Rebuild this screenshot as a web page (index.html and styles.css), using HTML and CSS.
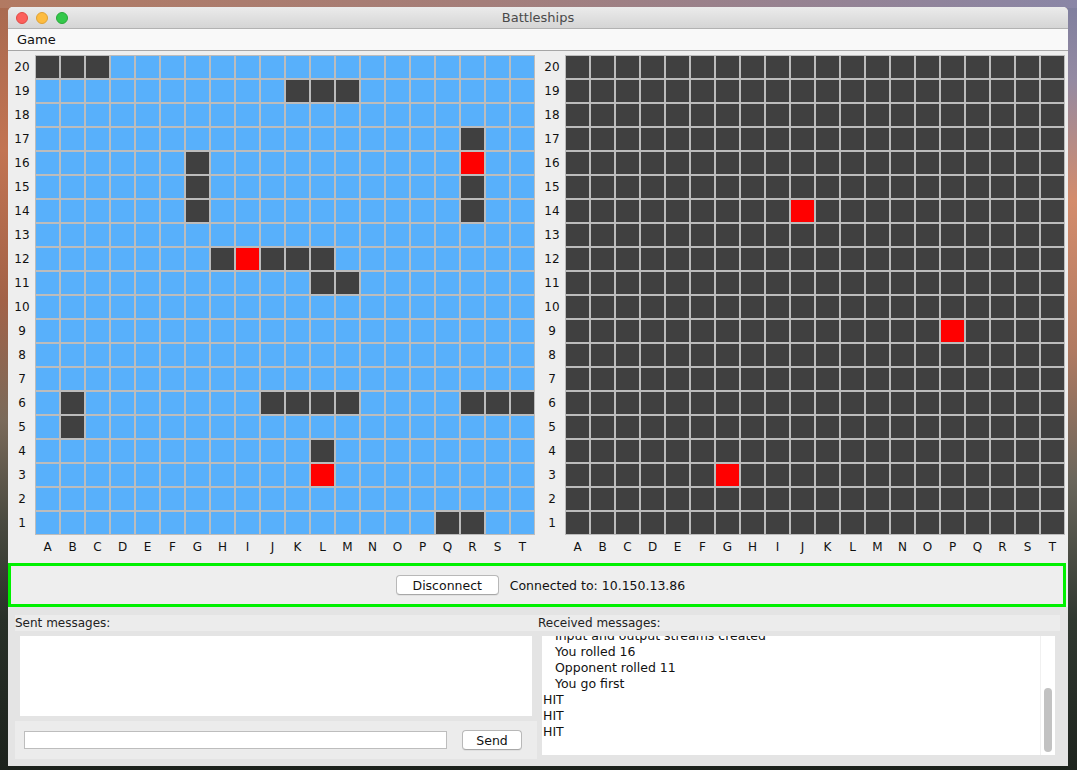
FILE: index.html
```html
<!DOCTYPE html>
<html>
<head>
<meta charset="utf-8">
<title>Battleships</title>
<link rel="stylesheet" href="styles.css">
</head>
<body>
<div class="window">
  <div class="titlebar">
    <div class="lights"><span class="light red"></span><span class="light yellow"></span><span class="light green"></span></div>
    <div class="title">Battleships</div>
    <div></div>
  </div>
  <div class="menubar"><span class="menu">Game</span></div>
  <div class="content">
    <div class="boards">
      <div class="board">
        <div class="rowlabels"><span>20</span><span>19</span><span>18</span><span>17</span><span>16</span><span>15</span><span>14</span><span>13</span><span>12</span><span>11</span><span>10</span><span>9</span><span>8</span><span>7</span><span>6</span><span>5</span><span>4</span><span>3</span><span>2</span><span>1</span></div>
        <div class="grid own">
<i class=s></i><i class=s></i><i class=s></i><i></i><i></i> <i></i><i></i><i></i><i></i><i></i> <i></i><i></i><i></i><i></i><i></i> <i></i><i></i><i></i><i></i><i></i>
<i></i><i></i><i></i><i></i><i></i> <i></i><i></i><i></i><i></i><i></i> <i class=s></i><i class=s></i><i class=s></i><i></i><i></i> <i></i><i></i><i></i><i></i><i></i>
<i></i><i></i><i></i><i></i><i></i> <i></i><i></i><i></i><i></i><i></i> <i></i><i></i><i></i><i></i><i></i> <i></i><i></i><i></i><i></i><i></i>
<i></i><i></i><i></i><i></i><i></i> <i></i><i></i><i></i><i></i><i></i> <i></i><i></i><i></i><i></i><i></i> <i></i><i></i><i class=s></i><i></i><i></i>
<i></i><i></i><i></i><i></i><i></i> <i></i><i class=s></i><i></i><i></i><i></i> <i></i><i></i><i></i><i></i><i></i> <i></i><i></i><i class=h></i><i></i><i></i>
<i></i><i></i><i></i><i></i><i></i> <i></i><i class=s></i><i></i><i></i><i></i> <i></i><i></i><i></i><i></i><i></i> <i></i><i></i><i class=s></i><i></i><i></i>
<i></i><i></i><i></i><i></i><i></i> <i></i><i class=s></i><i></i><i></i><i></i> <i></i><i></i><i></i><i></i><i></i> <i></i><i></i><i class=s></i><i></i><i></i>
<i></i><i></i><i></i><i></i><i></i> <i></i><i></i><i></i><i></i><i></i> <i></i><i></i><i></i><i></i><i></i> <i></i><i></i><i></i><i></i><i></i>
<i></i><i></i><i></i><i></i><i></i> <i></i><i></i><i class=s></i><i class=h></i><i class=s></i> <i class=s></i><i class=s></i><i></i><i></i><i></i> <i></i><i></i><i></i><i></i><i></i>
<i></i><i></i><i></i><i></i><i></i> <i></i><i></i><i></i><i></i><i></i> <i></i><i class=s></i><i class=s></i><i></i><i></i> <i></i><i></i><i></i><i></i><i></i>
<i></i><i></i><i></i><i></i><i></i> <i></i><i></i><i></i><i></i><i></i> <i></i><i></i><i></i><i></i><i></i> <i></i><i></i><i></i><i></i><i></i>
<i></i><i></i><i></i><i></i><i></i> <i></i><i></i><i></i><i></i><i></i> <i></i><i></i><i></i><i></i><i></i> <i></i><i></i><i></i><i></i><i></i>
<i></i><i></i><i></i><i></i><i></i> <i></i><i></i><i></i><i></i><i></i> <i></i><i></i><i></i><i></i><i></i> <i></i><i></i><i></i><i></i><i></i>
<i></i><i></i><i></i><i></i><i></i> <i></i><i></i><i></i><i></i><i></i> <i></i><i></i><i></i><i></i><i></i> <i></i><i></i><i></i><i></i><i></i>
<i></i><i class=s></i><i></i><i></i><i></i> <i></i><i></i><i></i><i></i><i class=s></i> <i class=s></i><i class=s></i><i class=s></i><i></i><i></i> <i></i><i></i><i class=s></i><i class=s></i><i class=s></i>
<i></i><i class=s></i><i></i><i></i><i></i> <i></i><i></i><i></i><i></i><i></i> <i></i><i></i><i></i><i></i><i></i> <i></i><i></i><i></i><i></i><i></i>
<i></i><i></i><i></i><i></i><i></i> <i></i><i></i><i></i><i></i><i></i> <i></i><i class=s></i><i></i><i></i><i></i> <i></i><i></i><i></i><i></i><i></i>
<i></i><i></i><i></i><i></i><i></i> <i></i><i></i><i></i><i></i><i></i> <i></i><i class=h></i><i></i><i></i><i></i> <i></i><i></i><i></i><i></i><i></i>
<i></i><i></i><i></i><i></i><i></i> <i></i><i></i><i></i><i></i><i></i> <i></i><i></i><i></i><i></i><i></i> <i></i><i></i><i></i><i></i><i></i>
<i></i><i></i><i></i><i></i><i></i> <i></i><i></i><i></i><i></i><i></i> <i></i><i></i><i></i><i></i><i></i> <i></i><i class=s></i><i class=s></i><i></i><i></i>
        </div>
        <div class="collabels"><span>A</span><span>B</span><span>C</span><span>D</span><span>E</span><span>F</span><span>G</span><span>H</span><span>I</span><span>J</span><span>K</span><span>L</span><span>M</span><span>N</span><span>O</span><span>P</span><span>Q</span><span>R</span><span>S</span><span>T</span></div>
      </div>
      <div class="board">
        <div class="rowlabels"><span>20</span><span>19</span><span>18</span><span>17</span><span>16</span><span>15</span><span>14</span><span>13</span><span>12</span><span>11</span><span>10</span><span>9</span><span>8</span><span>7</span><span>6</span><span>5</span><span>4</span><span>3</span><span>2</span><span>1</span></div>
        <div class="grid enemy">
<i></i><i></i><i></i><i></i><i></i> <i></i><i></i><i></i><i></i><i></i> <i></i><i></i><i></i><i></i><i></i> <i></i><i></i><i></i><i></i><i></i>
<i></i><i></i><i></i><i></i><i></i> <i></i><i></i><i></i><i></i><i></i> <i></i><i></i><i></i><i></i><i></i> <i></i><i></i><i></i><i></i><i></i>
<i></i><i></i><i></i><i></i><i></i> <i></i><i></i><i></i><i></i><i></i> <i></i><i></i><i></i><i></i><i></i> <i></i><i></i><i></i><i></i><i></i>
<i></i><i></i><i></i><i></i><i></i> <i></i><i></i><i></i><i></i><i></i> <i></i><i></i><i></i><i></i><i></i> <i></i><i></i><i></i><i></i><i></i>
<i></i><i></i><i></i><i></i><i></i> <i></i><i></i><i></i><i></i><i></i> <i></i><i></i><i></i><i></i><i></i> <i></i><i></i><i></i><i></i><i></i>
<i></i><i></i><i></i><i></i><i></i> <i></i><i></i><i></i><i></i><i></i> <i></i><i></i><i></i><i></i><i></i> <i></i><i></i><i></i><i></i><i></i>
<i></i><i></i><i></i><i></i><i></i> <i></i><i></i><i></i><i></i><i class=h></i> <i></i><i></i><i></i><i></i><i></i> <i></i><i></i><i></i><i></i><i></i>
<i></i><i></i><i></i><i></i><i></i> <i></i><i></i><i></i><i></i><i></i> <i></i><i></i><i></i><i></i><i></i> <i></i><i></i><i></i><i></i><i></i>
<i></i><i></i><i></i><i></i><i></i> <i></i><i></i><i></i><i></i><i></i> <i></i><i></i><i></i><i></i><i></i> <i></i><i></i><i></i><i></i><i></i>
<i></i><i></i><i></i><i></i><i></i> <i></i><i></i><i></i><i></i><i></i> <i></i><i></i><i></i><i></i><i></i> <i></i><i></i><i></i><i></i><i></i>
<i></i><i></i><i></i><i></i><i></i> <i></i><i></i><i></i><i></i><i></i> <i></i><i></i><i></i><i></i><i></i> <i></i><i></i><i></i><i></i><i></i>
<i></i><i></i><i></i><i></i><i></i> <i></i><i></i><i></i><i></i><i></i> <i></i><i></i><i></i><i></i><i></i> <i class=h></i><i></i><i></i><i></i><i></i>
<i></i><i></i><i></i><i></i><i></i> <i></i><i></i><i></i><i></i><i></i> <i></i><i></i><i></i><i></i><i></i> <i></i><i></i><i></i><i></i><i></i>
<i></i><i></i><i></i><i></i><i></i> <i></i><i></i><i></i><i></i><i></i> <i></i><i></i><i></i><i></i><i></i> <i></i><i></i><i></i><i></i><i></i>
<i></i><i></i><i></i><i></i><i></i> <i></i><i></i><i></i><i></i><i></i> <i></i><i></i><i></i><i></i><i></i> <i></i><i></i><i></i><i></i><i></i>
<i></i><i></i><i></i><i></i><i></i> <i></i><i></i><i></i><i></i><i></i> <i></i><i></i><i></i><i></i><i></i> <i></i><i></i><i></i><i></i><i></i>
<i></i><i></i><i></i><i></i><i></i> <i></i><i></i><i></i><i></i><i></i> <i></i><i></i><i></i><i></i><i></i> <i></i><i></i><i></i><i></i><i></i>
<i></i><i></i><i></i><i></i><i></i> <i></i><i class=h></i><i></i><i></i><i></i> <i></i><i></i><i></i><i></i><i></i> <i></i><i></i><i></i><i></i><i></i>
<i></i><i></i><i></i><i></i><i></i> <i></i><i></i><i></i><i></i><i></i> <i></i><i></i><i></i><i></i><i></i> <i></i><i></i><i></i><i></i><i></i>
<i></i><i></i><i></i><i></i><i></i> <i></i><i></i><i></i><i></i><i></i> <i></i><i></i><i></i><i></i><i></i> <i></i><i></i><i></i><i></i><i></i>
        </div>
        <div class="collabels"><span>A</span><span>B</span><span>C</span><span>D</span><span>E</span><span>F</span><span>G</span><span>H</span><span>I</span><span>J</span><span>K</span><span>L</span><span>M</span><span>N</span><span>O</span><span>P</span><span>Q</span><span>R</span><span>S</span><span>T</span></div>
      </div>
    </div>
    <div class="status">
      <button class="btn disconnect">Disconnect</button>
      <span class="conn">Connected to: 10.150.13.86</span>
    </div>
    <div class="chat">
      <div class="sent">
        <div class="header">Sent messages:</div>
        <div class="sentbox"></div>
        <div class="inputrow">
          <input class="msginput" type="text">
          <button class="btn send">Send</button>
        </div>
      </div>
      <div class="received">
        <div class="header recv-h">Received messages:</div>
        <div class="recvbox">
          <div class="recvtext">
            <div class="scrolled">
              <div class="line ind">Input and output streams created</div>
              <div class="line ind">You rolled 16</div>
              <div class="line ind">Opponent rolled 11</div>
              <div class="line ind">You go first</div>
              <div class="line">HIT</div>
              <div class="line">HIT</div>
              <div class="line">HIT</div>
            </div>
          </div>
          <div class="scrollbar"><div class="thumb"></div></div>
        </div>
      </div>
    </div>
  </div>
</div>
</body>
</html>
```
FILE: styles.css
```css
html, body {
  margin: 0;
  padding: 0;
}
body {
  width: 1077px;
  height: 770px;
  overflow: hidden;
  font-family: "DejaVu Sans", "Liberation Sans", sans-serif;
  color: #111;
  background:
    linear-gradient(90deg, #b27a62 0%, #a47e7a 45%, #8a86a6 100%) top left / 100% 8px no-repeat,
    linear-gradient(180deg, #7e7e9e 0, #948aa2 80px, #d48c6c 200px, #b07a62 350px, #6a665c 480px, #303830 620px, #1e241e 770px) top right / 10px 100% no-repeat,
    linear-gradient(180deg, #a86a50 0, #c27452 150px, #a26248 300px, #7a6a5a 420px, #4a4a40 520px, #283028 620px, #1c221c 770px);
}
.window {
  margin: 7px 0 0 8px;
  width: 1060px;
  height: 759px;
  background: #eeeeee;
  border-radius: 5px 5px 0 0;
  overflow: hidden;
  display: flex;
  flex-direction: column;
}
.titlebar {
  height: 21px;
  flex: none;
  border-bottom: 1px solid #b2b2b2;
  background: linear-gradient(#ebebeb, #d5d5d5);
  display: grid;
  grid-template-columns: 1fr auto 1fr;
  align-items: center;
}
.lights {
  display: flex;
  gap: 8px;
  padding-left: 8px;
}
.light {
  width: 12px;
  height: 12px;
  border-radius: 50%;
  box-sizing: border-box;
}
.red { background: #fc605c; border: 1px solid #e04a45; }
.yellow { background: #fdbc40; border: 1px solid #dea236; }
.green { background: #34c84a; border: 1px solid #28a83a; }
.title {
  font-size: 13px;
  color: #4a4a4a;
}
.menubar {
  height: 21px;
  flex: none;
  background: #f9f9f9;
  border-bottom: 1px solid #a6a6a6;
  display: flex;
  align-items: center;
  padding-left: 9px;
}
.menu {
  font-size: 13px;
  color: #111;
}
.content {
  flex: 1;
  display: flex;
  flex-direction: column;
}
.boards {
  display: flex;
  gap: 4px;
  padding: 4px 0 0 1px;
}
.board {
  display: grid;
  grid-template-columns: 26px 500px;
  grid-template-rows: 480px 24px;
}
.rowlabels {
  grid-column: 1;
  grid-row: 1;
  display: grid;
  grid-template-rows: repeat(20, 24px);
  font-size: 12px;
}
.rowlabels span {
  display: flex;
  align-items: center;
  justify-content: center;
}
.grid {
  grid-column: 2;
  grid-row: 1;
  display: grid;
  grid-template-columns: repeat(20, 25px);
  grid-template-rows: repeat(20, 24px);
}
.grid i {
  display: block;
  border: 1px solid #bcbcbc;
  background: #58b0fb;
}
.grid.enemy i { background: #404040; }
.grid i.s { background: #404040; }
.grid i.h, .grid.enemy i.h { background: #ff0000; }
.collabels {
  grid-column: 2;
  grid-row: 2;
  display: grid;
  grid-template-columns: repeat(20, 25px);
  font-size: 12px;
}
.collabels span {
  display: flex;
  align-items: center;
  justify-content: center;
}
.status {
  margin: 4px 2px 0 0;
  height: 44px;
  box-sizing: border-box;
  border: 3px solid #00f000;
  display: flex;
  align-items: center;
  justify-content: center;
  gap: 11px;
  padding-left: 7px;
}
.btn {
  font-family: "DejaVu Sans", "Liberation Sans", sans-serif;
  font-size: 12.5px;
  color: #111;
  background: #ffffff;
  border: 1px solid #b8b8b8;
  border-bottom-color: #a8a8a8;
  border-radius: 4px;
  height: 20px;
  padding: 0;
  box-shadow: 0 1px 0 rgba(0,0,0,0.05);
}
.disconnect { width: 103px; }
.conn { font-size: 12.5px; }
.chat {
  flex: 1;
  background: #e4e4e4;
  display: flex;
  padding: 8px 8px 7px 7px;
}
.sent {
  width: 522px;
  display: flex;
  flex-direction: column;
}
.received {
  width: 523px;
  display: flex;
  flex-direction: column;
}
.header {
  height: 16px;
  line-height: 16px;
  background: #ececec;
  font-size: 12px;
  color: #222;
}
.recv-h { padding-left: 1px; }
.sentbox {
  margin: 5px 5px 0 5px;
  height: 80px;
  background: #ffffff;
}
.inputrow {
  margin-top: 5px;
  height: 38px;
  background: #ececec;
  display: flex;
  align-items: center;
  padding-left: 9px;
  gap: 15px;
}
.msginput {
  width: 423px;
  height: 18px;
  box-sizing: border-box;
  border: 1px solid #bdbdbd;
  background: #fff;
  margin: 0;
  padding: 0;
}
.send { width: 60px; }
.recvbox {
  margin: 5px 5px 0 5px;
  height: 119px;
  background: #ffffff;
  display: flex;
  overflow: hidden;
}
.recvtext {
  flex: 1;
  overflow: hidden;
  font-size: 12.5px;
  padding-left: 1px;
}
.scrolled {
  transform: translateY(-8px);
}
.line {
  height: 16px;
  line-height: 16px;
  white-space: nowrap;
}
.line.ind { padding-left: 12px; }
.scrollbar {
  width: 15px;
  flex: none;
  border-left: 1px solid #f0f0f0;
  box-sizing: border-box;
}
.thumb {
  width: 8px;
  height: 64px;
  margin: 52px 0 0 3px;
  border-radius: 4px;
  background: #c2c2c2;
}
```
